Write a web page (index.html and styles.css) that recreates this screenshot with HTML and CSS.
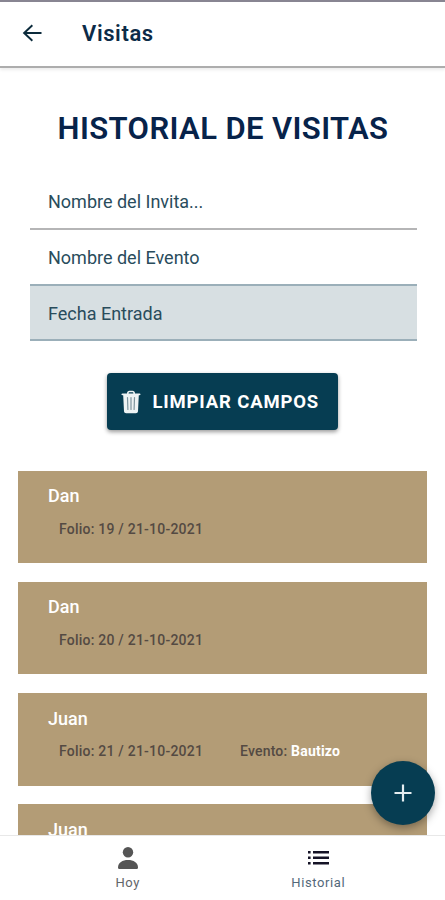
FILE: index.html
```html
<!DOCTYPE html>
<html lang="es">
  <head>
    <meta charset="utf-8">
    <meta name="viewport" content="width=device-width, initial-scale=1">
    <title>Visitas</title>
    <link rel="stylesheet" href="styles.css">
  </head>
  <body>
    <header class="toolbar">
      <svg class="back" viewBox="0 0 24 24"><path d="M21.500 11H6.700l6.300-5.900-1.300-1.500L2.700 12l9 8.400 1.300-1.500L6.700 13h14.800z"/></svg>
      <span class="toolbar-title">Visitas</span>
    </header>

    <main class="content">
      <h1>HISTORIAL DE VISITAS</h1>

      <div class="filters">
        <div class="item"><span>Nombre del Invita...</span></div>
        <div class="item item-line"><span>Nombre del Evento</span></div>
        <div class="item item-date"><span>Fecha Entrada</span></div>
      </div>

      <button class="btn-clear">
        <svg viewBox="0 0 20 24">
          <path fill="#eef3f4" d="M6 3.500C6 1.600 7 .8 8.500 .8h3C13 .8 14 1.600 14 3.500h4.500c.6 0 1 .3 1 .8s-.4.900-1 .9h-.7L17 21.300c-.1 1.300-.9 2-2.200 2H5.200c-1.300 0-2.100-.7-2.200-2L2.200 5.200h-.7c-.6 0-1-.4-1-.9s.4-.8 1-.8zm1.600 0h4.800c0-.8-.3-1.200-1-1.200H8.600c-.7 0-1 .4-1 1.200z"/>
          <path fill="none" stroke="#7d949d" stroke-width="1.200" stroke-linecap="round" d="M6.500 7.500l.4 12M10 7.500v12M13.500 7.500l-.4 12"/>
        </svg>
        <span>LIMPIAR CAMPOS</span>
      </button>

      <div class="cards">
        <div class="card">
          <h2>Dan</h2>
          <div class="row"><span class="folio">Folio: 19 / 21-10-2021</span></div>
        </div>
        <div class="card">
          <h2>Dan</h2>
          <div class="row"><span class="folio">Folio: 20 / 21-10-2021</span></div>
        </div>
        <div class="card">
          <h2>Juan</h2>
          <div class="row">
            <span class="folio">Folio: 21 / 21-10-2021</span>
            <span class="evento">Evento: <b>Bautizo</b></span>
          </div>
        </div>
        <div class="card">
          <h2>Juan</h2>
        </div>
      </div>
    </main>

    <!-- Floating add button -->
    <button class="fab">
      <svg viewBox="0 0 18 18"><path d="M9 .5v17M.5 9h17"/></svg>
    </button>

    <nav class="tabs">
      <a class="tab tab-hoy">
        <svg viewBox="0 0 20 22"><circle cx="10" cy="5.300" r="5.200"/><path d="M0 20.500C0 15.500 4.500 13 10 13s10 2.500 10 7.500c0 .9-.5 1.500-1.300 1.500H1.300C.5 22 0 21.400 0 20.500z"/></svg>
        <span>Hoy</span>
      </a>
      <a class="tab tab-historial">
        <svg viewBox="0 0 21 22"><path d="M0 4h2.600v2.500H0zM5 4h16v2.500H5zM0 9.500h2.600V12H0zM5 9.500h16V12H5zM0 15h2.600v2.500H0zM5 15h16v2.500H5z"/></svg>
        <span>Historial</span>
      </a>
    </nav>
  </body>
</html>
```
FILE: styles.css
```css
* { box-sizing: border-box; }

body {
  margin: 0;
  height: 900px;
  display: flex;
  flex-direction: column;
  overflow: hidden;
  position: relative;
  background: #fff;
  color: #0c2b48;
  font-family: Roboto, "Liberation Sans", sans-serif;
}

h1, h2 { margin: 0; font-weight: 500; }
button { border: none; font-family: inherit; color: #fff; }

/* Toolbar */
.toolbar {
  flex: none;
  height: 68px;
  padding: 0 20px 2px;
  display: flex;
  align-items: center;
  border-top: 2px solid #888592;
  border-bottom: 2px solid #adadad;
  box-shadow: 0 2px 3px rgba(0, 0, 0, 0.08);
}
.back { width: 24px; height: 24px; fill: #0c2b3c; }
.toolbar-title { margin-left: 38px; font-size: 22px; font-weight: 600; letter-spacing: 0.6px; }

/* Content */
.content { flex: 1; min-height: 0; overflow: hidden; }
.content h1 {
  margin-top: 42px;
  height: 38px;
  padding-left: 1px;
  line-height: 38px;
  text-align: center;
  font-size: 31px;
  font-weight: 600;
  letter-spacing: 0.4px;
  color: #07234a;
  white-space: nowrap;
}

.filters { margin: 26px 28px 0 30px; }
.item {
  height: 55.5px;
  padding: 2px 0 0 18px;
  display: flex;
  align-items: center;
  border-bottom: 2px solid #b5b5b6;
  font-size: 18px;
  color: #294c5c;
  white-space: nowrap;
}
.item-line { height: 56px; border-color: #9bafb9; }
.item-date { background: #d7dfe2; border-color: #9bafb9; }

.btn-clear {
  width: 231px;
  height: 57px;
  margin: 32px 0 0 107.4px;
  padding: 0 0 0 14px;
  display: flex;
  align-items: center;
  gap: 11px;
  background: #063d52;
  border-radius: 4px;
  box-shadow: 0 2px 4px rgba(0, 0, 0, 0.4);
  font-size: 18.5px;
  font-weight: 700;
  letter-spacing: 0.85px;
  white-space: nowrap;
}
.btn-clear svg { width: 20px; height: 24px; }

/* Visits */
.cards { margin: 40.5px 17.6px 0 18.4px; display: flex; flex-direction: column; gap: 18.8px; }
.card { height: 92.5px; padding: 13.5px 0 0 29.6px; background: #b39c76; }
.card h2 { height: 24px; line-height: 24px; font-size: 18px; color: #fff; }
.row {
  margin: 10.5px 0 0 11px;
  line-height: 20px;
  display: flex;
  font-size: 14px;
  font-weight: 500;
  color: #544a43;
  white-space: nowrap;
}
.folio { width: 181px; letter-spacing: 0.22px; }
.evento { letter-spacing: 0.2px; }
.row b { color: #fff; font-weight: 700; }

.fab {
  position: absolute;
  right: 10px;
  bottom: 75px;
  width: 64px;
  height: 64px;
  padding: 0;
  display: flex;
  align-items: center;
  justify-content: center;
  border-radius: 50%;
  background: #063d52;
  box-shadow: 0 3px 8px rgba(0, 0, 0, 0.35);
}
.fab svg { width: 18px; height: 18px; fill: none; stroke: #e4edf0; stroke-width: 2.2; }

/* Bottom tabs */
.tabs {
  flex: none;
  height: 65px;
  padding: 0 32px;
  display: flex;
  border-top: 1px solid #e8e8e8;
  background: #fff;
}
.tab {
  flex: 1;
  padding: 11px 0 0 1px;
  display: flex;
  flex-direction: column;
  align-items: center;
  gap: 5px;
  font-size: 13px;
  line-height: 17px;
  letter-spacing: 0.6px;
  color: #626569;
}
.tab svg { width: 20px; height: 22px; fill: #555; }
.tab-historial { color: #53687a; }
.tab-historial svg { width: 21px; fill: #151326; }
```
